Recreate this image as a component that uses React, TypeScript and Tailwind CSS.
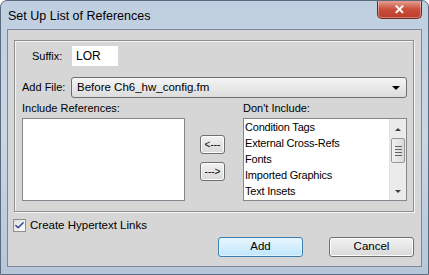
import { Check } from "lucide-react";

const ui = { fontFamily: "'Liberation Sans', Arial, sans-serif" };

const dontInclude = [
  "Condition Tags",
  "External Cross-Refs",
  "Fonts",
  "Imported Graphics",
  "Text Insets",
];

const ArrowBtn = ({ label }: { label: string }) => (
  <button className="w-[25px] h-[19px] rounded-[3px] border border-[#707070] bg-gradient-to-b from-[#f2f2f2] to-[#d9d9d9] text-[10px] leading-none text-black shadow-[inset_0_0_0_1px_#fcfcfc]">
    {label}
  </button>
);

const App = () => {
  return (
    <div
      className="w-[429px] h-[275px] overflow-hidden rounded-t-[7px] border border-[#5a6b80] bg-gradient-to-b from-[#bfcfe0] via-[#c9d6e4] to-[#b7c7d9] flex flex-col"
      style={ui}
    >
      {/* Title bar */}
      <div className="h-[28px] flex items-start justify-between pl-[7px] pr-[6px] shrink-0">
        <span className="mt-[8px] text-[12.5px] leading-[15px] text-black">
          Set Up List of References
        </span>
        <div className="w-[45px] h-[19px] -mt-px rounded-b-[5px] border border-t-0 border-[#6d2b26] bg-gradient-to-b from-[#e8a89c] via-[#c8503c] to-[#c0392b] flex items-center justify-center shadow-[inset_0_0_0_1px_rgba(255,255,255,0.35)]">
          <span className="text-white text-[13px] font-bold leading-none">✕</span>
        </div>
      </div>

      {/* Client area */}
      <div className="flex-1 mx-[6px] mb-[7px] border border-[#7a8899] bg-[#d6d6d6] flex flex-col pl-[6px] pr-[7px] pt-[10px] text-[11px] text-black">
        {/* Group box */}
        <div className="h-[172px] border border-[#8e8e8e] shadow-[1px_1px_0_#f4f4f4,inset_1px_1px_0_#f4f4f4] flex flex-col pr-[6px]">
          <div className="flex items-center h-[20px] mt-[5px] pl-[17px]">
            <span className="w-[40px]">Suffix:</span>
            <div className="w-[46px] h-[20px] bg-white flex items-center pl-[4px] text-[12px]">LOR</div>
          </div>
          <div className="flex items-center h-[21px] mt-[11px] pl-[7px]">
            <span className="w-[49px]">Add File:</span>
            <div className="flex-1 h-[21px] rounded-[3px] border border-[#707070] bg-gradient-to-b from-[#f5f5f5] to-[#dcdcdc] flex items-center justify-between pl-[5px] pr-[6px]">
              <span className="text-[11.5px]">Before Ch6_hw_config.fm</span>
              <span className="w-0 h-0 border-x-[4px] border-x-transparent border-t-[4px] border-t-black" />
            </div>
          </div>
          <div className="flex mt-[3px] pl-[7px]">
            <div className="w-[163px] flex flex-col">
              <span className="h-[14px] leading-[14px] whitespace-nowrap">Include References:</span>
              <div className="h-[83px] mt-[3px] border border-[#828790] bg-white" />
            </div>
            <div className="w-[58px] flex flex-col pl-[15px] pt-[34px] gap-[8px]">
              <ArrowBtn label="<---" />
              <ArrowBtn label="--->" />
            </div>
            <div className="w-[164px] flex flex-col">
              <span className="h-[14px] leading-[14px] whitespace-nowrap">Don&apos;t Include:</span>
              <div className="h-[83px] mt-[3px] border border-[#828790] bg-white flex">
                <div className="flex-1 pl-[1px] text-[11px] tracking-[-0.2px] leading-[16px] overflow-hidden">
                  {dontInclude.map((t) => (
                    <div key={t} className="whitespace-nowrap">{t}</div>
                  ))}
                </div>
                <div className="w-[17px] bg-[#ebebeb] border-l border-[#e3e3e3] flex flex-col items-center justify-between pt-[9px] pb-[7px] relative">
                  <span className="w-0 h-0 border-x-[3px] border-x-transparent border-b-[3px] border-b-[#404040]" />
                  <div className="absolute top-[19px] left-[1px] w-[14px] h-[25px] rounded-[2px] border border-[#979797] bg-gradient-to-r from-[#f0f0f0] to-[#dadada] flex flex-col items-center justify-center gap-[2px]">
                    <span className="w-[7px] h-px bg-[#606060]" />
                    <span className="w-[7px] h-px bg-[#606060]" />
                    <span className="w-[7px] h-px bg-[#606060]" />
                    <span className="w-[7px] h-px bg-[#606060]" />
                  </div>
                  <span className="w-0 h-0 border-x-[3px] border-x-transparent border-t-[3px] border-t-[#404040]" />
                </div>
              </div>
            </div>
          </div>
        </div>

        {/* Checkbox */}
        <div className="flex items-center h-[13px] mt-[7px] -ml-px">
          <div className="w-[13px] h-[13px] border border-[#8f8f8f] bg-gradient-to-br from-[#dcdcdc] to-white flex items-center justify-center">
            <Check className="w-[11px] h-[11px] text-[#2c3f8f]" strokeWidth={3} />
          </div>
          <span className="ml-[4px] text-[11.5px]">Create Hypertext Links</span>
        </div>

        {/* Buttons */}
        <div className="flex justify-end gap-[26px] mt-[5px] text-[11.5px]">
          <button className="w-[85px] h-[20px] rounded-[3px] border border-[#3c7fb1] bg-gradient-to-b from-[#eaf6fd] to-[#bee6fd] shadow-[inset_0_0_0_1px_#e3f4fc]">
            Add
          </button>
          <button className="w-[85px] h-[20px] rounded-[3px] border border-[#707070] bg-gradient-to-b from-[#f2f2f2] to-[#d9d9d9] shadow-[inset_0_0_0_1px_#fcfcfc]">
            Cancel
          </button>
        </div>
      </div>
    </div>
  );
};

export default App;
